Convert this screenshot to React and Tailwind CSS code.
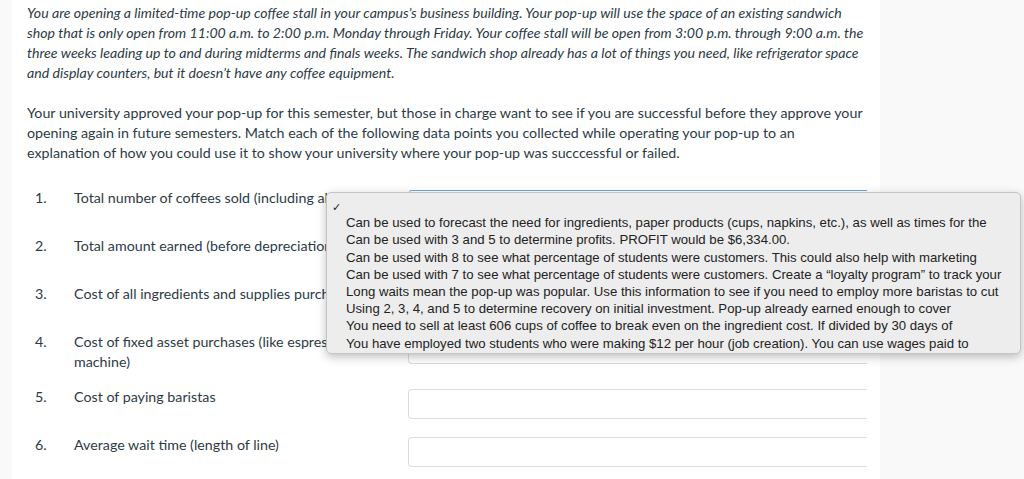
const rows = [
  { n: '1.', label: 'Total number of coffees sold (including all drinks)' },
  { n: '2.', label: 'Total amount earned (before depreciation)' },
  { n: '3.', label: 'Cost of all ingredients and supplies purchased' },
  { n: '4.', label: 'Cost of fixed asset purchases (like espresso machine)' },
  { n: '5.', label: 'Cost of paying baristas' },
  { n: '6.', label: 'Average wait time (length of line)' },
]

// native menu shows each option cut at a word
const options = [
  'Can be used to forecast the need for ingredients, paper products (cups, napkins, etc.), as well as times for the',
  'Can be used with 3 and 5 to determine profits. PROFIT would be $6,334.00.',
  'Can be used with 8 to see what percentage of students were customers. This could also help with marketing',
  'Can be used with 7 to see what percentage of students were customers. Create a \u201cloyalty program\u201d to track your',
  'Long waits mean the pop-up was popular. Use this information to see if you need to employ more baristas to cut',
  'Using 2, 3, 4, and 5 to determine recovery on initial investment. Pop-up already earned enough to cover',
  'You need to sell at least 606 cups of coffee to break even on the ingredient cost. If divided by 30 days of',
  'You have employed two students who were making $12 per hour (job creation). You can use wages paid to',
]

const Menu = () => (
  <div className="absolute left-[-82px] top-[11px] z-10 w-[695px] h-[162px] rounded-[5px] border border-[#c4c4c4] bg-[#ededed] shadow-[0_3px_10px_rgba(0,0,0,0.25)] pt-[4px] font-['Liberation_Sans',Arial,sans-serif] text-[13.2px] leading-[17.2px] text-[#222]">
    <div className="relative h-[17.2px]">
      <span className="absolute left-[5px] top-[3px] text-[11px] leading-[14px]">✓</span>
    </div>
    {options.map((o, i) => (
      <div key={i} className="pl-[19px] whitespace-nowrap">
        {o}
      </div>
    ))}
  </div>
)

const App = () => {
  return (
    <div className="min-h-screen flex bg-[#f9f9f9] font-['Lato','Open_Sans',sans-serif] text-[14.25px] leading-[20px] text-[#2d3b45]">
      <div className="ml-[12px] w-[868px] bg-white pl-[15px] pr-[12px] pt-[3px] pb-[20px]">
        <p className="italic text-[14.15px]">
          You are opening a limited-time pop-up coffee stall in your campus’s business building. Your pop-up will use the space of an existing sandwich shop that is only open from 11:00 a.m. to 2:00 p.m. Monday through Friday. Your coffee stall will be open from 3:00 p.m. through 9:00 a.m. the three weeks leading up to and during midterms and finals weeks. The sandwich shop already has a lot of things you need, like refrigerator space and display counters, but it doesn’t have any coffee equipment.
        </p>
        <p className="mt-[20px]">
          Your university approved your pop-up for this semester, but those in charge want to see if you are successful before they approve your opening again in future semesters. Match each of the following data points you collected while operating your pop-up to an explanation of how you could use it to show your university where your pop-up was succcessful or failed.
        </p>
        <div className="mt-[18px]">
          {rows.map((r, i) => (
            <div key={r.n} className="flex items-start">
              <div className="flex w-[381px] pt-[7px] pb-[8px]">
                <span className="w-[47px] pl-[8px] shrink-0">{r.n}</span>
                <span className="w-[322px]">{r.label}</span>
              </div>
              <div className="relative py-[9px]">
                <div
                  className={`h-[30px] w-[459px] rounded-l-[4px] border-y border-l bg-white ${
                    i === 0 ? 'border-[#e3e3e3] border-t-[#6ea8dc]' : 'border-[#dcdcdc]'
                  }`}
                />
                {i === 0 && <Menu />}
              </div>
            </div>
          ))}
        </div>
      </div>
    </div>
  )
}

export default App
